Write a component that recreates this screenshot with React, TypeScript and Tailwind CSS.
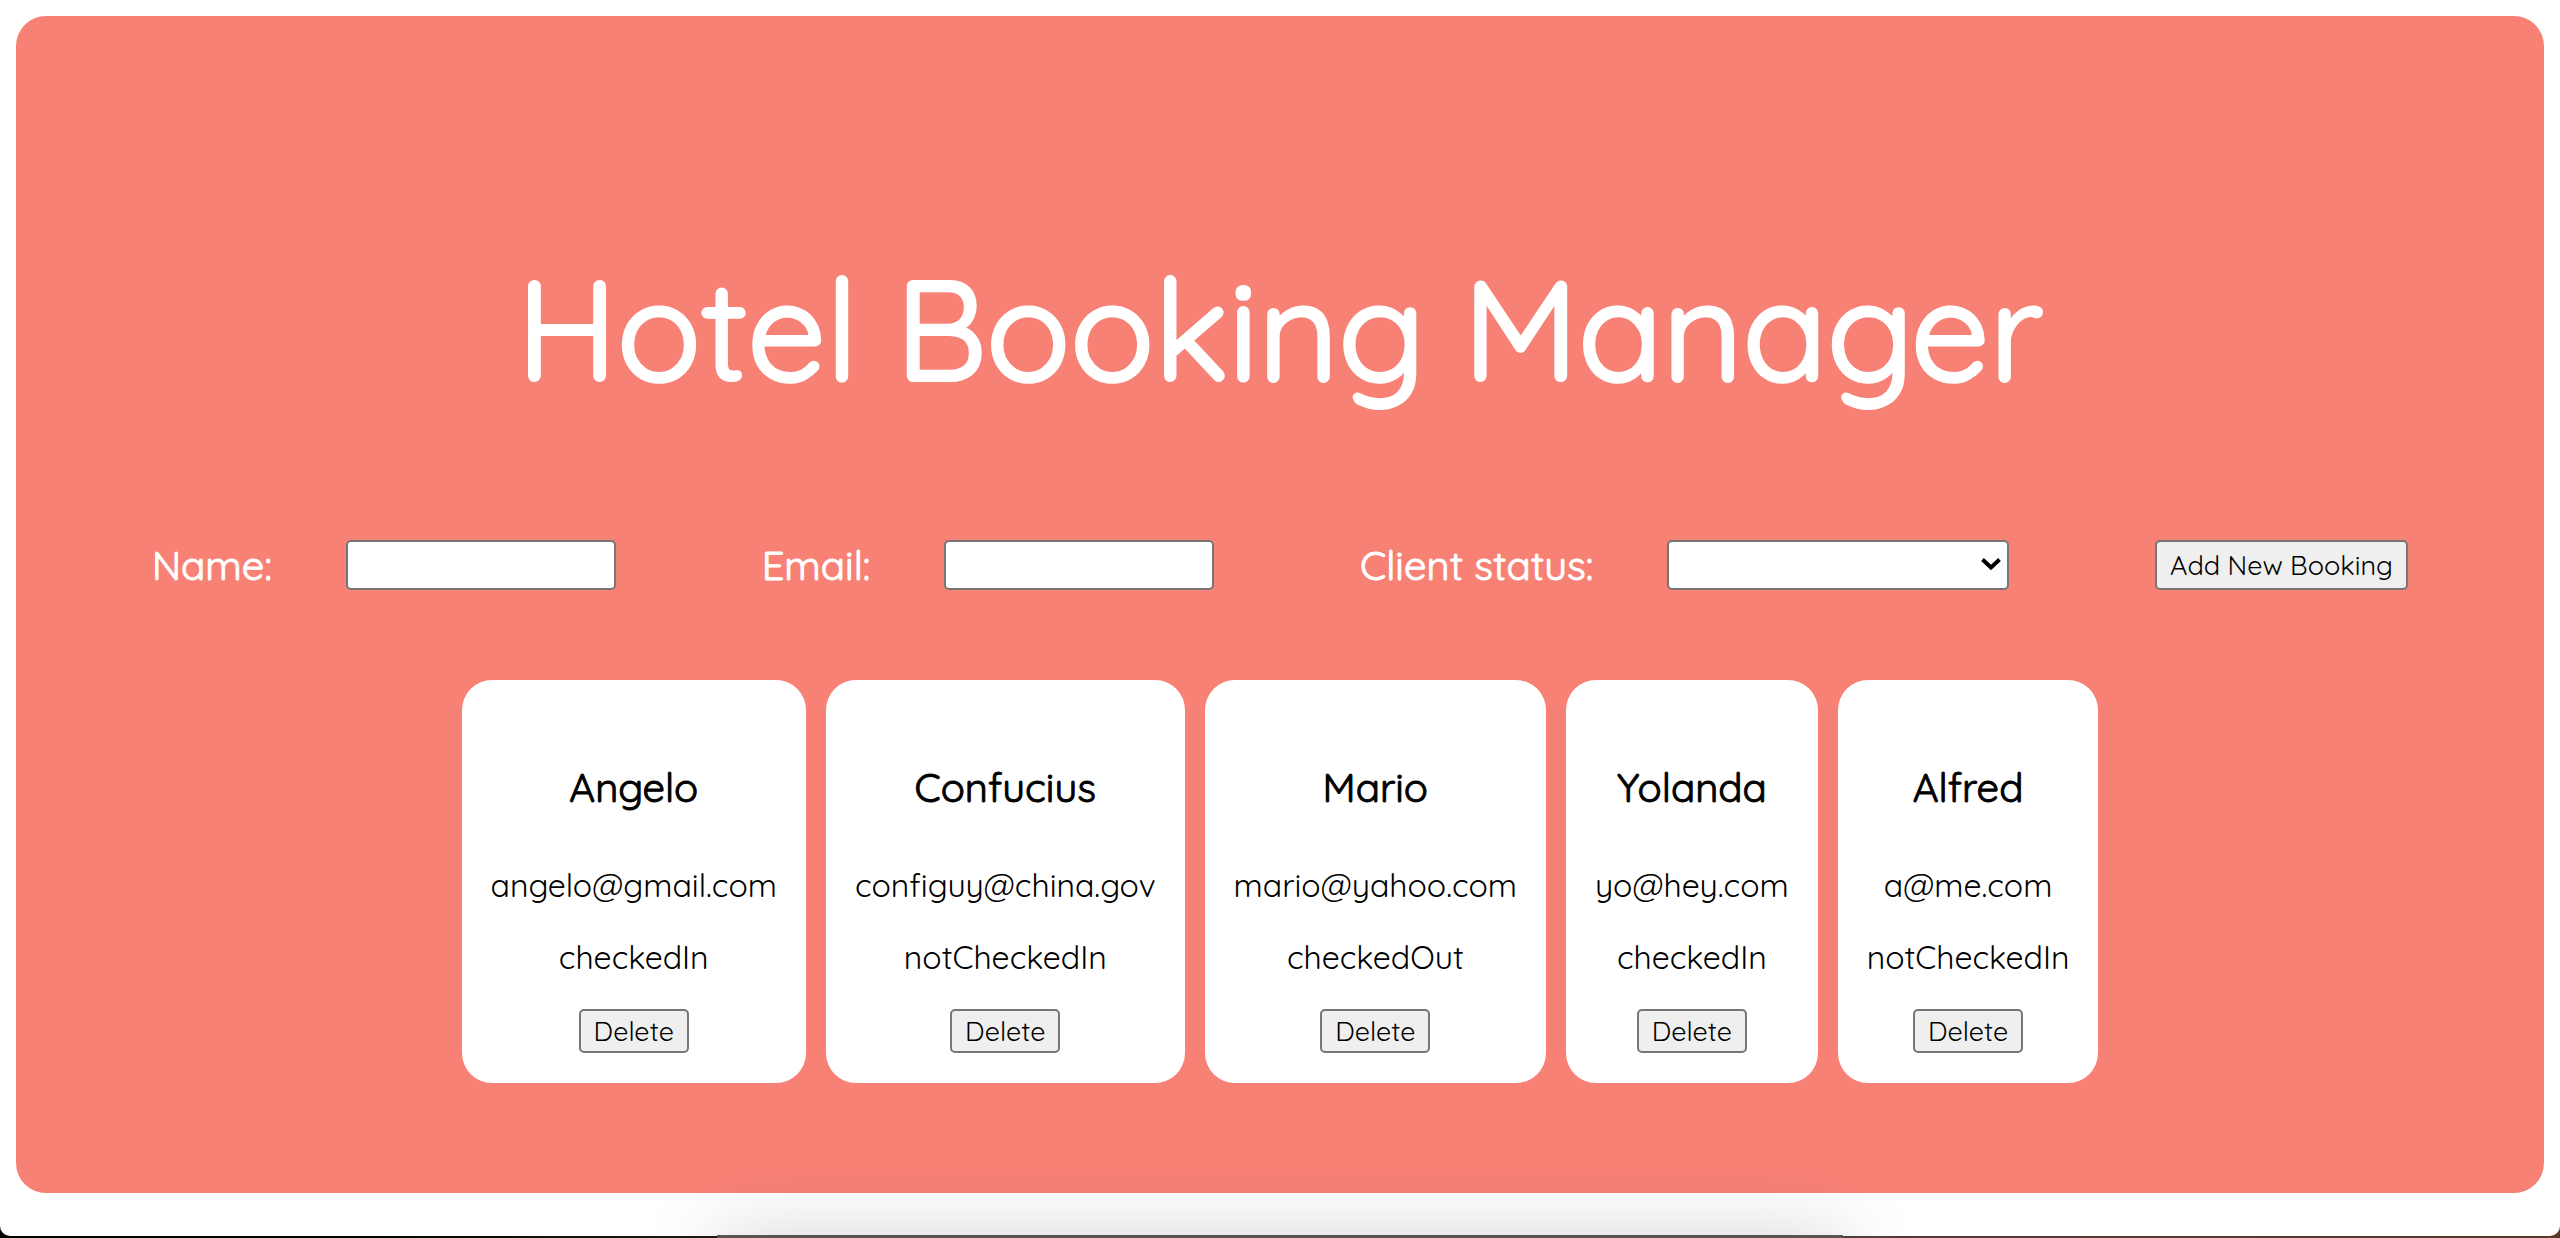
import { useState } from "react";
import type { FormEvent } from "react";

type Booking = { name: string; email: string; status: string };

const initialBookings: Booking[] = [
  { name: "Angelo", email: "angelo@gmail.com", status: "checkedIn" },
  { name: "Confucius", email: "configuy@china.gov", status: "notCheckedIn" },
  { name: "Mario", email: "mario@yahoo.com", status: "checkedOut" },
  { name: "Yolanda", email: "yo@hey.com", status: "checkedIn" },
  { name: "Alfred", email: "a@me.com", status: "notCheckedIn" },
];

const field = "h-[50px] rounded-[5px] border-2 border-[#767676] bg-white px-2 text-[27px] text-black";
const button = "rounded-[5px] border-2 border-[#767676] bg-[#efefef] px-[13px] text-[27px] leading-[34px] text-black";
const heading = "text-[40px] leading-[50px] font-normal [-webkit-text-stroke:1px_currentColor]";

function BookingCard({ booking, onDelete }: { booking: Booking; onDelete: () => void }) {
  return (
    <li className="flex flex-col items-center rounded-[30px] bg-white px-[29px] pt-[82px] pb-[30px] text-black">
      <h2 className={heading}>{booking.name}</h2>
      <p className="mt-[53px] text-[32px] leading-[40px]">{booking.email}</p>
      <p className="mt-8 text-[32px] leading-[40px]">{booking.status}</p>
      <button type="button" onClick={onDelete} className={button + " mt-8 h-11"}>
        Delete
      </button>
    </li>
  );
}

export default function App() {
  const [bookings, setBookings] = useState(initialBookings);
  const [name, setName] = useState("");
  const [email, setEmail] = useState("");
  const [status, setStatus] = useState("");

  const addBooking = (e: FormEvent) => {
    e.preventDefault();
    setBookings([...bookings, { name, email, status }]);
  };

  return (
    <div className="relative flex min-h-screen flex-col overflow-hidden bg-linear-to-r from-black via-[#4a4446] to-[#5a3828] pb-[2px] font-['Quicksand','Lato',sans-serif]">
      <div className="flex-1 rounded-b-[10px] bg-white p-4 pb-10">
        <main className="flex flex-col items-center rounded-[30px] bg-[#f78175] pt-[222px] pb-[110px] text-white">
          <h1 className="text-[139px] leading-[180px] font-normal [-webkit-text-stroke:4px_currentColor]">Hotel Booking Manager</h1>
          <form onSubmit={addBooking} className="mt-[122px] flex w-full items-center justify-between px-[136px]">
            <div className="flex items-center gap-[74px]">
              <label htmlFor="name" className={heading}>Name:</label>
              <input id="name" type="text" value={name} onChange={(e) => setName(e.target.value)} className={field + " w-[270px]"} />
            </div>
            <div className="flex items-center gap-[74px]">
              <label htmlFor="email" className={heading}>Email:</label>
              <input id="email" type="text" value={email} onChange={(e) => setEmail(e.target.value)} className={field + " w-[270px]"} />
            </div>
            <div className="flex items-center gap-[74px]">
              <label htmlFor="status" className={heading}>Client status:</label>
              <div className="relative flex">
                <select id="status" value={status} onChange={(e) => setStatus(e.target.value)} className={field + " w-[342px] appearance-none"}>
                  <option value=""></option>
                  <option value="checkedIn">checkedIn</option>
                  <option value="notCheckedIn">notCheckedIn</option>
                  <option value="checkedOut">checkedOut</option>
                </select>
                <svg viewBox="0 0 20 12" className="pointer-events-none absolute top-[18px] right-[8px] h-3 w-5" fill="none" stroke="black" strokeWidth="4">
                  <path d="M1.5 1.5 10 9.5 18.5 1.5" />
                </svg>
              </div>
            </div>
            <button type="submit" className={button + " h-[50px]"}>Add New Booking</button>
          </form>
          <ul className="mt-[90px] flex gap-5">
            {bookings.map((b, i) => (
              <BookingCard key={b.email + i} booking={b} onDelete={() => setBookings(bookings.filter((_, j) => j !== i))} />
            ))}
          </ul>
        </main>
      </div>
      <div className="pointer-events-none absolute inset-x-[28%] -bottom-[97px] h-[100px] bg-[#5a5355] shadow-[0_0_80px_rgba(0,0,0,0.17)]" />
    </div>
  );
}
